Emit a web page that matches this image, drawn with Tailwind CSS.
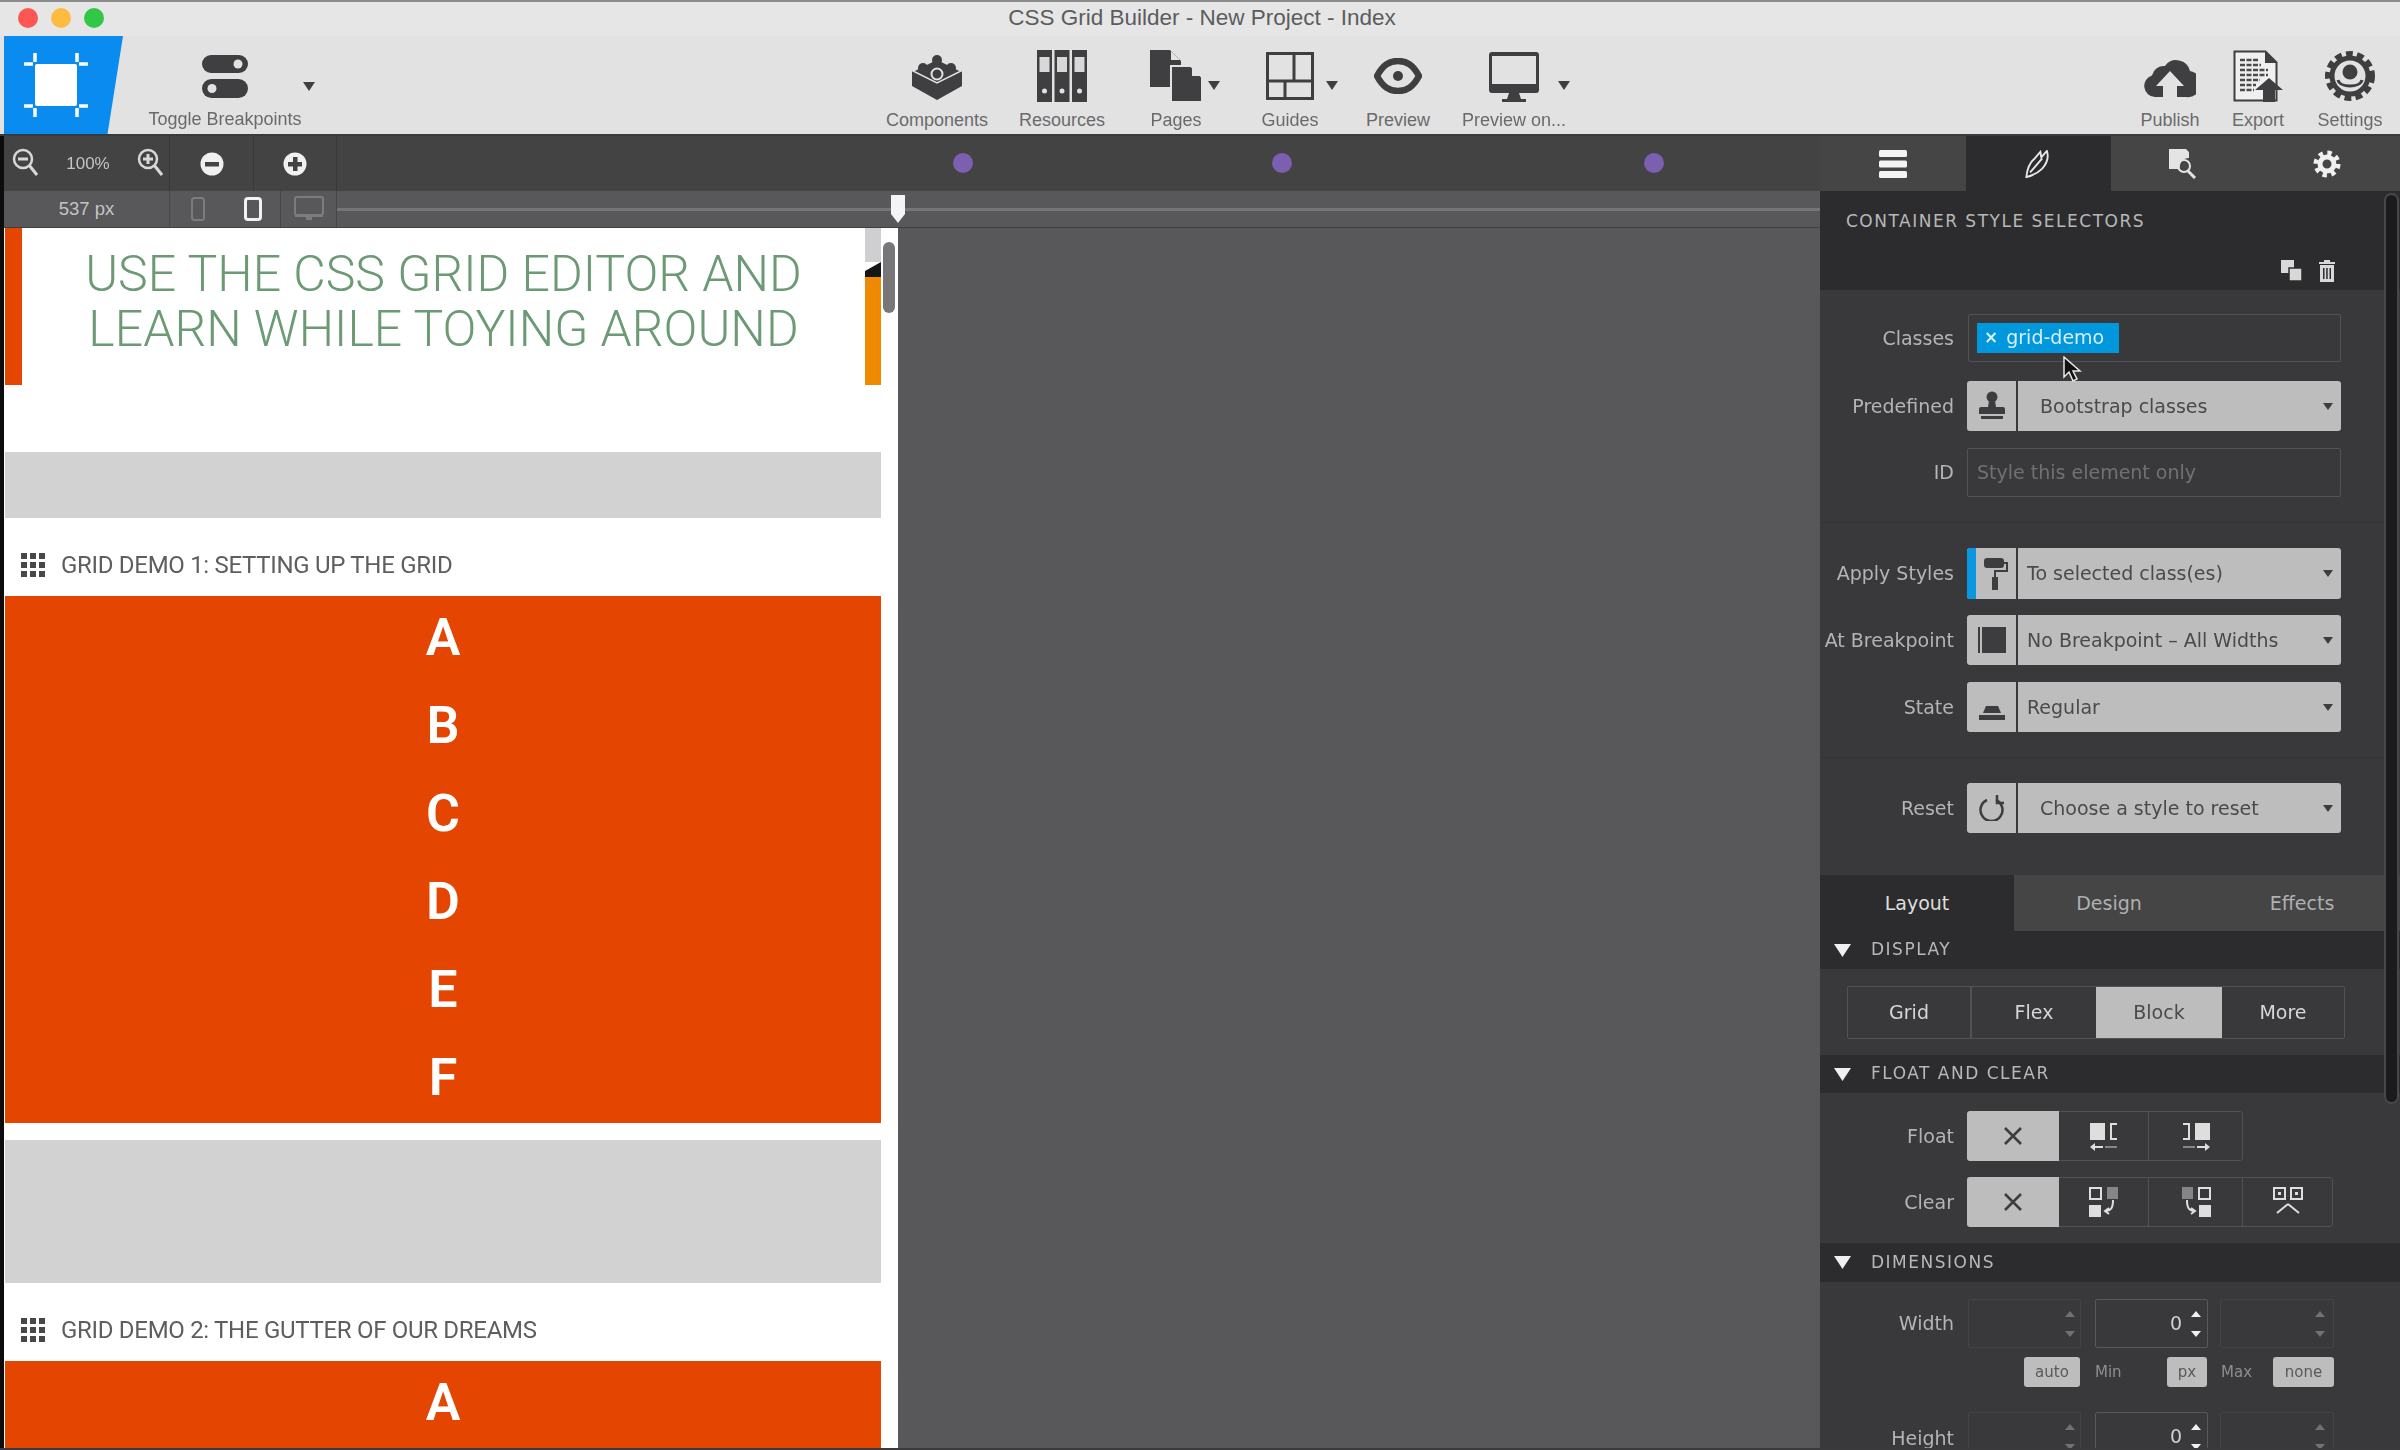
<!DOCTYPE html>
<html lang="en">
<head>
  <meta charset="utf-8" />
  <title>CSS Grid Builder</title>
  <script src="https://cdn.jsdelivr.net/npm/@tailwindcss/browser@4"></script>
</head>
<body class="bg-[#58585a]">
<div class="relative w-[2400px] h-[1450px] overflow-hidden flex flex-col blur-[0.6px] font-['Liberation_Sans',sans-serif]">

  <!-- title bar + toolbar -->
  <header class="h-[136px] shrink-0 bg-[#e2e2e2] border-t-2 border-b-2 border-t-[#8a8a8a] border-b-[#3a3a3c]">
    <div class="relative h-[34px] flex items-center gap-[13px] pl-[18px] pb-[2px] bg-[#e6e6e6]">
      <span class="w-[20px] h-[20px] rounded-full bg-[#fc5753]"></span>
      <span class="w-[20px] h-[20px] rounded-full bg-[#fdbc40]"></span>
      <span class="w-[20px] h-[20px] rounded-full bg-[#33c748]"></span>
      <span class="absolute left-[1008px] top-[3px] w-[388px] text-center text-[22.5px] leading-[26px] text-[#5c5c5e] whitespace-nowrap">CSS Grid Builder - New Project - Index</span>
    </div>
    <div class="flex h-[98px] text-[18px] text-[#6a6a6c]">
      <!-- logo -->
      <div class="ml-[4px] w-[119px] h-[98px] bg-[#0a8bf0] [clip-path:polygon(0_0,100%_0,87%_100%,0_100%)] shrink-0 flex items-center justify-center">
        <svg width="64" height="64" viewBox="0 0 64 64" class="-ml-[16px]">
          <rect x="11" y="11" width="42" height="42" rx="2" fill="#fff"/>
          <path d="M11 0v9M0 11h9M53 0v9M55 11h9M11 64v-9M0 53h9M53 64v-9M55 53h9" stroke="#fff" stroke-width="3.5" fill="none"/>
        </svg>
      </div>

      <div class="relative ml-[17px] w-[170px] flex flex-col items-center">
        <svg class="mt-[19px]" width="46" height="43" viewBox="0 0 46 43">
          <rect x="0" y="0" width="46" height="18" rx="9" fill="#3f3f41"/><circle cx="36" cy="9" r="4.5" fill="#e2e2e2"/>
          <rect x="0" y="24" width="46" height="19" rx="9.5" fill="#3f3f41"/><circle cx="10" cy="33.5" r="4.5" fill="#e2e2e2"/>
        </svg>
        <span class="mt-[8px] whitespace-nowrap">Toggle Breakpoints</span>
        <svg class="absolute left-[163px] top-[46px]" width="12" height="9" viewBox="0 0 12 9"><path d="M0 0h12L6 9z" fill="#3f3f41"/></svg>
      </div>

      <div class="ml-[572px] w-[110px] flex flex-col items-center">
        <svg class="mt-[18px]" width="52" height="46" viewBox="0 0 52 46">
          <path d="M26 13 51 17v15L26 46 1 32V17z" fill="#3f3f41"/>
          <path d="M26 5 50 17 26 29 2 17z" fill="#3f3f41" stroke="#e2e2e2" stroke-width="1.5"/>
          <circle cx="26" cy="6" r="5" fill="#3f3f41"/><circle cx="12" cy="14" r="5" fill="#3f3f41"/><circle cx="40" cy="14" r="5" fill="#3f3f41"/>
          <circle cx="26" cy="20" r="5.5" fill="#3f3f41" stroke="#e2e2e2" stroke-width="2"/>
        </svg>
        <span class="mt-[7px] whitespace-nowrap">Components</span>
      </div>

      <div class="ml-[15px] w-[110px] flex flex-col items-center">
        <svg class="mt-[14px]" width="50" height="52" viewBox="0 0 50 52">
          <path d="M0 0h15v52H0zM17.500 0h15v52h-15zM35 0h15v52H35z" fill="#3f3f41"/>
          <path d="M2.500 7h10v15h-10zM20 7h10v15H20zM37.500 7h10v15h-10z" fill="#d8d8d8"/>
          <circle cx="7.500" cy="41" r="2.500" fill="#e2e2e2"/><circle cx="25" cy="41" r="2.500" fill="#e2e2e2"/><circle cx="42.500" cy="41" r="2.500" fill="#e2e2e2"/>
        </svg>
        <span class="mt-[5px] whitespace-nowrap">Resources</span>
      </div>

      <div class="relative ml-[9px] w-[100px] flex flex-col items-center">
        <svg class="mt-[14px]" width="52" height="52" viewBox="0 0 52 52">
          <path d="M0 0h20l11 11v26H0z" fill="#3f3f41"/>
          <path d="M21 16h20l11 11v25H21z" fill="#3f3f41" stroke="#e2e2e2" stroke-width="2"/>
          <path d="M21 1v9h9zM42 17v9h9z" fill="#e2e2e2"/>
        </svg>
        <span class="mt-[5px] whitespace-nowrap">Pages</span>
        <svg class="absolute left-[82px] top-[45px]" width="12" height="9" viewBox="0 0 12 9"><path d="M0 0h12L6 9z" fill="#3f3f41"/></svg>
      </div>

      <div class="relative ml-[14px] w-[100px] flex flex-col items-center">
        <svg class="mt-[16px]" width="48" height="48" viewBox="0 0 48 48">
          <path d="M1.500 1.500h45v45h-45zM1.500 29h45M28 1.500V29M19 29v17.500" fill="none" stroke="#3f3f41" stroke-width="3"/>
        </svg>
        <span class="mt-[7px] whitespace-nowrap">Guides</span>
        <svg class="absolute left-[86px] top-[45px]" width="12" height="9" viewBox="0 0 12 9"><path d="M0 0h12L6 9z" fill="#3f3f41"/></svg>
      </div>

      <div class="ml-[13px] w-[90px] flex flex-col items-center">
        <svg class="mt-[22px]" width="48" height="36" viewBox="0 0 48 36">
          <path d="M3 18C9 7 15 3 24 3s15 4 21 15c-6 11-12 15-21 15S9 29 3 18z" fill="none" stroke="#3f3f41" stroke-width="6.500"/>
          <circle cx="24" cy="18" r="5" fill="#3f3f41"/>
        </svg>
        <span class="mt-[13px] whitespace-nowrap">Preview</span>
      </div>

      <div class="relative ml-[11px] w-[120px] flex flex-col items-center">
        <svg class="mt-[16px]" width="50" height="50" viewBox="0 0 50 50">
          <path d="M3 0h44a3 3 0 0 1 3 3v35a3 3 0 0 1-3 3H3a3 3 0 0 1-3-3V3a3 3 0 0 1 3-3z" fill="#3f3f41"/>
          <rect x="3" y="4" width="44" height="28" fill="#e2e2e2"/>
          <path d="M20 41h10l2 6h5v3H13v-3h5z" fill="#3f3f41"/>
        </svg>
        <span class="mt-[5px] whitespace-nowrap">Preview on...</span>
        <svg class="absolute left-[104px] top-[45px]" width="12" height="9" viewBox="0 0 12 9"><path d="M0 0h12L6 9z" fill="#3f3f41"/></svg>
      </div>

      <div class="ml-[556px] w-[80px] flex flex-col items-center">
        <svg class="mt-[21px]" width="52" height="41" viewBox="0 0 52 41">
          <path d="M11 40A11 11 0 0 1 8 18.500 12 12 0 0 1 21 9 14 14 0 0 1 46 14a13 13 0 0 1-4 26H33V29h7L26 14 12 29h7v11z" fill="#3f3f41"/>
        </svg>
        <span class="mt-[9px] whitespace-nowrap">Publish</span>
      </div>

      <div class="ml-[8px] w-[80px] flex flex-col items-center">
        <svg class="mt-[14px]" width="50" height="52" viewBox="0 0 50 52">
          <path d="M1.500 1.500h31l11 11v38h-42z" fill="#f0f0f0" stroke="#3f3f41" stroke-width="2"/>
          <path d="M32 1v12h12z" fill="#3f3f41"/>
          <path d="M7 10h18M7 15h21M7 20h28M7 25h28M7 30h20M7 35h16M7 40h14" stroke="#4b4b4d" stroke-width="2.500" stroke-dasharray="5 1.500"/>
          <path d="M36 28 50 40h-8v12H30V40h-8z" fill="#3f3f41"/>
        </svg>
        <span class="mt-[5px] whitespace-nowrap">Export</span>
      </div>

      <div class="ml-[12px] w-[80px] flex flex-col items-center">
        <svg class="mt-[14px]" width="52" height="52" viewBox="0 0 52 52">
          <circle cx="26" cy="26" r="21" fill="none" stroke="#3f3f41" stroke-width="8" stroke-dasharray="6.500 4"/>
          <circle cx="26" cy="26" r="18" fill="none" stroke="#3f3f41" stroke-width="5"/>
          <circle cx="26" cy="22" r="7.500" fill="#3f3f41"/>
          <path d="M14 30c2 8 22 8 24 0" fill="none" stroke="#3f3f41" stroke-width="3"/>
        </svg>
        <span class="mt-[5px] whitespace-nowrap">Settings</span>
      </div>
    </div>
  </header>

  <div class="flex flex-1 min-h-0">
    <!-- canvas column -->
    <div class="w-[1820px] shrink-0 flex flex-col">
      <!-- breakpoints row -->
      <div class="relative h-[55px] shrink-0 bg-[#434344] flex items-center text-[#c4c4c4] text-[17px]">
        <div class="w-[170px] h-full flex items-center pl-[12px] border-r border-[#39393b]">
          <svg width="26" height="32" viewBox="0 0 26 32"><circle cx="11" cy="11" r="9" fill="none" stroke="#d8d8d8" stroke-width="2.500"/><path d="M6 11h10M17 17l8 10" stroke="#d8d8d8" stroke-width="3"/></svg>
          <span class="ml-[28px] w-[44px] text-center">100%</span>
          <svg class="ml-[27px]" width="26" height="32" viewBox="0 0 26 32"><circle cx="11" cy="11" r="9" fill="none" stroke="#d8d8d8" stroke-width="2.500"/><path d="M6 11h10M11 6v10M17 17l8 10" stroke="#d8d8d8" stroke-width="3"/></svg>
        </div>
        <div class="w-[84px] h-full flex items-center justify-center border-r border-[#39393b]">
          <svg width="24" height="24" viewBox="0 0 24 24"><circle cx="12" cy="12" r="11.500" fill="#f0f0f0"/><rect x="5" y="10" width="14" height="4.500" fill="#434344"/></svg>
        </div>
        <div class="w-[83px] h-full flex items-center justify-center border-r border-[#39393b]">
          <svg width="24" height="24" viewBox="0 0 24 24"><circle cx="12" cy="12" r="11.500" fill="#f0f0f0"/><path d="M5 10h5V5h4.500v5H19v4.500h-4.500V19H10v-4.500H5z" fill="#434344"/></svg>
        </div>
        <span class="absolute left-[953px] top-[17px] w-[20px] h-[20px] rounded-full bg-[#7b5fb0]"></span>
        <span class="absolute left-[1272px] top-[17px] w-[20px] h-[20px] rounded-full bg-[#7b5fb0]"></span>
        <span class="absolute left-[1644px] top-[17px] w-[20px] h-[20px] rounded-full bg-[#7b5fb0]"></span>
      </div>
      <div class="relative h-[37px] shrink-0 bg-[#58585a] flex items-center border-b border-[#3f3f41]">
        <div class="w-[170px] h-full flex items-center justify-center pl-[4px] border-r border-[#464648] text-[18.5px] text-[#c4c4c4]">537 px</div>
        <div class="w-[55px] h-full flex items-center justify-center">
          <svg width="14" height="24" viewBox="0 0 14 24"><rect x="1" y="1" width="12" height="22" rx="2.500" fill="none" stroke="#7c7c7e" stroke-width="2"/></svg>
        </div>
        <div class="w-[56px] h-full flex items-center justify-center border-r border-[#464648]">
          <svg width="18" height="24" viewBox="0 0 18 24"><rect x="1.500" y="1.500" width="15" height="21" rx="2.500" fill="none" stroke="#f2f2f2" stroke-width="3"/></svg>
        </div>
        <div class="w-[56px] h-full flex items-center justify-center border-r border-[#464648]">
          <svg width="30" height="26" viewBox="0 0 30 26"><rect x="1" y="1" width="28" height="18" rx="2" fill="none" stroke="#7c7c7e" stroke-width="2"/><path d="M1 19h28v2H1zM12 21h6v3h-6z" fill="#7c7c7e"/></svg>
        </div>
        <div class="flex-1 h-[3px] bg-[#757577]"></div>
        <svg class="absolute left-[890px] top-[4px]" width="16" height="28" viewBox="0 0 16 28"><path d="M1 0h14v19l-7 9-7-9z" fill="#f4f4f6"/></svg>
      </div>

      <div class="flex flex-1 min-h-0">
        <!-- preview page -->
        <div class="relative w-[898px] shrink-0 bg-white pl-[5px] pr-[17px] flex flex-col overflow-hidden">
          <div class="flex h-[157px] shrink-0">
            <div class="w-[17px] bg-[#e44500]"></div>
            <h1 class="flex-1 pt-[19px] text-center text-[50px] leading-[55px] font-light text-[#6b9a74] font-['Roboto',sans-serif] whitespace-nowrap">USE THE CSS GRID EDITOR AND<br>LEARN WHILE TOYING AROUND</h1>
            <div class="w-[16px] flex flex-col">
              <div class="h-[34px] bg-[#cfcfd2]"></div>
              <div class="h-[15px] bg-[#161616] [clip-path:polygon(0_60%,100%_0,100%_100%,0_100%)]"></div>
              <div class="flex-1 bg-[#ef8a00]"></div>
            </div>
          </div>
          <div class="mt-[67px] h-[66px] shrink-0 bg-[#d2d2d2]"></div>
          <div class="h-[78px] shrink-0 flex items-center pl-[16px] pt-[16px] text-[#5e5e60] font-['Roboto',sans-serif] text-[24px] tracking-[-0.3px]">
            <svg width="24" height="24" viewBox="0 0 24 24" fill="#48484a"><path d="M0 0h6v6H0zM9 0h6v6H9zM18 0h6v6h-6zM0 9h6v6H0zM9 9h6v6H9zM18 9h6v6h-6zM0 18h6v6H0zM9 18h6v6H9zM18 18h6v6h-6z"/></svg>
            <span class="ml-[16px] whitespace-nowrap">GRID DEMO 1: SETTING UP THE GRID</span>
          </div>
          <div class="h-[527px] shrink-0 bg-[#e44500] flex flex-col items-center text-white font-semibold text-[52px] font-['Roboto',sans-serif]">
            <div class="h-[88px] mt-[-2px] flex items-center">A</div>
            <div class="h-[88px] flex items-center">B</div>
            <div class="h-[88px] flex items-center">C</div>
            <div class="h-[88px] flex items-center">D</div>
            <div class="h-[88px] flex items-center">E</div>
            <div class="h-[88px] flex items-center">F</div>
          </div>
          <div class="mt-[17px] h-[143px] shrink-0 bg-[#d2d2d2]"></div>
          <div class="h-[78px] shrink-0 flex items-center pl-[16px] pt-[16px] text-[#5e5e60] font-['Roboto',sans-serif] text-[24px] tracking-[-0.3px]">
            <svg width="24" height="24" viewBox="0 0 24 24" fill="#48484a"><path d="M0 0h6v6H0zM9 0h6v6H9zM18 0h6v6h-6zM0 9h6v6H0zM9 9h6v6H9zM18 9h6v6h-6zM0 18h6v6H0zM9 18h6v6H9zM18 18h6v6h-6z"/></svg>
            <span class="ml-[16px] whitespace-nowrap">GRID DEMO 2: THE GUTTER OF OUR DREAMS</span>
          </div>
          <div class="h-[87px] shrink-0 bg-[#e44500] flex justify-center text-white font-semibold text-[52px] font-['Roboto',sans-serif]">
            <div class="h-[84px] flex items-center">A</div>
          </div>
          <div class="absolute left-[883px] top-[14px] w-[12px] h-[71px] rounded-full bg-[#77777a]"></div>
        </div>
        <div class="flex-1 bg-[#58585a]"></div>
      </div>
    </div>

    <!-- inspector -->
    <aside class="relative w-[580px] shrink-0 flex flex-col bg-[#39393b] text-[#b4b4b4] font-['DejaVu_Sans',sans-serif] text-[19px]">
      <div class="flex h-[55px] shrink-0 bg-[#454546]">
        <div class="w-[146px] flex items-center justify-center">
          <svg width="28" height="28" viewBox="0 0 28 28" fill="#f4f4f4"><rect y="0" width="28" height="7" rx="1.500"/><rect y="10.500" width="28" height="7" rx="1.500"/><rect y="21" width="28" height="7" rx="1.500"/></svg>
        </div>
        <div class="w-[145px] flex items-center justify-center bg-[#2c2c2e]">
          <svg width="27" height="28" viewBox="0 0 28 30" fill="none" stroke="#e8e8e8" stroke-width="2"><path d="M1 29c1-10 4-16 9-20l6-7 1 6 6-7c2 6 1 12-5 19-4 4-9 7-17 9zM5 24 18 9"/></svg>
        </div>
        <div class="w-[144px] flex items-center justify-center">
          <svg width="28" height="30" viewBox="0 0 28 30"><path d="M0 0h17l3 3v6a9 9 0 0 0-9 11H0z" fill="#e4e4e4"/><circle cx="15" cy="17" r="6" fill="none" stroke="#e4e4e4" stroke-width="2"/><path d="M19 22l7 7" stroke="#e4e4e4" stroke-width="3"/></svg>
        </div>
        <div class="flex-1 flex items-center justify-center pr-[1px]">
          <svg width="28" height="28" viewBox="0 0 28 28"><circle cx="14" cy="14" r="11" fill="none" stroke="#f0f0f0" stroke-width="5" stroke-dasharray="4.300 4.340"/><circle cx="14" cy="14" r="7" fill="none" stroke="#f0f0f0" stroke-width="5"/></svg>
        </div>
      </div>

      <div class="relative h-[99px] shrink-0 bg-[#2c2c2e] pl-[26px] pt-[20px]">
        <h2 class="text-[17px] leading-[20px] tracking-[1.5px] text-[#b8b8b8] whitespace-nowrap">CONTAINER STYLE SELECTORS</h2>
        <div class="absolute left-[461px] top-[69px] flex items-center gap-[16px]">
          <svg width="22" height="22" viewBox="0 0 22 22" fill="#d8d8d8"><rect x="0" y="0" width="13" height="13"/><rect x="8" y="8" width="13" height="13" stroke="#2c2c2e" stroke-width="1.500"/></svg>
          <svg width="16" height="22" viewBox="0 0 16 22" fill="#d8d8d8"><path d="M5 0h6v2h5v2H0V2h5zM1 5h14v17H1zM4 8v11h1.500V8zM7.200 8v11h1.500V8zM10.500 8v11H12V8z" fill-rule="evenodd"/></svg>
        </div>
      </div>

      <div class="flex flex-col">
        <!-- selector rows -->
        <div class="mt-[24px] flex items-center h-[48px]">
          <label class="w-[134px] text-right">Classes</label>
          <div class="ml-[14px] w-[373px] h-full border border-[#525254] rounded-[2px] pl-[8px] pt-[7px]">
            <span class="inline-flex items-center h-[30px] w-[142px] bg-[#0097dc] text-[#d8eefa] pl-[7px] gap-[8px] leading-none"><span class="font-bold text-[17px]">×</span>grid-demo</span>
          </div>
        </div>
        <div class="mt-[19px] flex items-center h-[50px]">
          <label class="w-[134px] text-right">Predefined</label>
          <div class="ml-[13px] w-[374px] h-full flex rounded-[3px] bg-[#bdbdbd] text-[#4a4a4c]">
            <div class="w-[51px] flex items-center justify-center border-r-2 border-[#39393b]">
              <svg width="26" height="30" viewBox="0 0 26 30" fill="#3d3d3f"><circle cx="13" cy="6" r="5.500"/><path d="M10 10h6l1 6h-8z"/><path d="M2 16h22a2 2 0 0 1 2 2v5H0v-5a2 2 0 0 1 2-2zM2 25h22v3H2z"/></svg>
            </div>
            <span class="flex-1 self-center pl-[22px] whitespace-nowrap">Bootstrap classes</span>
            <svg class="self-center mr-[8px]" width="10" height="7" viewBox="0 0 10 7"><path d="M0 0h10L5 7z" fill="#3d3d3f"/></svg>
          </div>
        </div>
        <div class="mt-[17px] flex items-center h-[49px]">
          <label class="w-[134px] text-right">ID</label>
          <div class="ml-[13px] w-[374px] h-full flex items-center border border-[#525254] rounded-[2px] pl-[9px] text-[#717173] whitespace-nowrap">Style this element only</div>
        </div>
        <div class="mt-[25px] h-[1px] bg-[#333335]"></div>

        <div class="mt-[25px] flex items-center h-[51px]">
          <label class="w-[134px] text-right">Apply Styles</label>
          <div class="ml-[13px] w-[374px] h-full flex rounded-[3px] bg-[#bdbdbd] text-[#4a4a4c] overflow-hidden">
            <div class="w-[51px] flex items-center justify-center border-r-2 border-l-[9px] border-r-[#39393b] border-l-[#0a97e0]">
              <svg width="24" height="32" viewBox="0 0 24 32" fill="#3d3d3f"><rect x="0" y="0" width="20" height="10" rx="3"/><path d="M20 4h4v10H12v5h-2v-7h12V6h-2zM8 19h6v13H8z"/></svg>
            </div>
            <span class="flex-1 self-center pl-[9px] whitespace-nowrap">To selected class(es)</span>
            <svg class="self-center mr-[8px]" width="10" height="7" viewBox="0 0 10 7"><path d="M0 0h10L5 7z" fill="#3d3d3f"/></svg>
          </div>
        </div>
        <div class="mt-[16px] flex items-center h-[50px]">
          <label class="w-[134px] text-right whitespace-nowrap">At Breakpoint</label>
          <div class="ml-[13px] w-[374px] h-full flex rounded-[3px] bg-[#bdbdbd] text-[#4a4a4c]">
            <div class="w-[51px] flex items-center justify-center border-r-2 border-[#39393b]">
              <svg width="28" height="26" viewBox="0 0 28 26" fill="#3d3d3f"><rect x="0" y="0" width="2" height="26"/><rect x="4" y="0" width="24" height="26"/></svg>
            </div>
            <span class="flex-1 self-center pl-[9px] whitespace-nowrap">No Breakpoint – All Widths</span>
            <svg class="self-center mr-[8px]" width="10" height="7" viewBox="0 0 10 7"><path d="M0 0h10L5 7z" fill="#3d3d3f"/></svg>
          </div>
        </div>
        <div class="mt-[17px] flex items-center h-[50px]">
          <label class="w-[134px] text-right">State</label>
          <div class="ml-[13px] w-[374px] h-full flex rounded-[3px] bg-[#bdbdbd] text-[#4a4a4c]">
            <div class="w-[51px] flex items-center justify-center border-r-2 border-[#39393b]">
              <svg class="mt-[12px]" width="26" height="14" viewBox="0 0 26 14" fill="#3d3d3f"><path d="M7 0h12l3 7H4zM0 9h26v5H0z"/></svg>
            </div>
            <span class="flex-1 self-center pl-[9px] whitespace-nowrap">Regular</span>
            <svg class="self-center mr-[8px]" width="10" height="7" viewBox="0 0 10 7"><path d="M0 0h10L5 7z" fill="#3d3d3f"/></svg>
          </div>
        </div>
        <div class="mt-[25px] h-[1px] bg-[#333335]"></div>

        <div class="mt-[25px] flex items-center h-[50px]">
          <label class="w-[134px] text-right">Reset</label>
          <div class="ml-[13px] w-[374px] h-full flex rounded-[3px] bg-[#bdbdbd] text-[#4a4a4c]">
            <div class="w-[51px] flex items-center justify-center border-r-2 border-[#39393b]">
              <svg width="26" height="26" viewBox="0 0 26 26" fill="none" stroke="#3d3d3f" stroke-width="2.500"><path d="M8 5a11 11 0 1 0 9 0"/><path d="M18 0v8h7" stroke-width="2.500"/></svg>
            </div>
            <span class="flex-1 self-center pl-[22px] whitespace-nowrap">Choose a style to reset</span>
            <svg class="self-center mr-[8px]" width="10" height="7" viewBox="0 0 10 7"><path d="M0 0h10L5 7z" fill="#3d3d3f"/></svg>
          </div>
        </div>

        <!-- Layout / Design / Effects -->
        <div class="mt-[42px] h-[56px] flex items-center text-center bg-[#454546]">
          <div class="w-[194px] h-full flex items-center justify-center bg-[#2c2c2e] text-[#dedede]">Layout</div>
          <div class="w-[190px] text-[#b0b0b0]">Design</div>
          <div class="flex-1 text-[#b0b0b0]">Effects</div>
        </div>

        <div class="h-[38px] flex items-center bg-[#2c2c2e] pl-[14px] text-[17px] tracking-[1.5px] text-[#b8b8b8]">
          <svg width="17" height="13" viewBox="0 0 17 13"><path d="M0 0h17L8.500 13z" fill="#f0f0f0"/></svg><span class="ml-[20px]">DISPLAY</span>
        </div>
        <div class="mt-[17px] ml-[27px] w-[498px] h-[53px] flex border border-[#525254] rounded-[2px] text-[#d6d6d6]">
          <div class="w-[124px] flex items-center justify-center border-r-2 border-[#525254]">Grid</div>
          <div class="w-[124px] flex items-center justify-center">Flex</div>
          <div class="w-[126px] flex items-center justify-center bg-[#bdbdbd] text-[#4a4a4c]">Block</div>
          <div class="flex-1 flex items-center justify-center">More</div>
        </div>

        <div class="mt-[16px] h-[38px] flex items-center bg-[#2c2c2e] pl-[14px] text-[17px] tracking-[1.5px] text-[#b8b8b8]">
          <svg width="17" height="13" viewBox="0 0 17 13"><path d="M0 0h17L8.500 13z" fill="#f0f0f0"/></svg><span class="ml-[20px]">FLOAT AND CLEAR</span>
        </div>
        <div class="mt-[18px] flex items-center h-[50px]">
          <label class="w-[134px] text-right">Float</label>
          <div class="ml-[13px] w-[276px] h-full flex border border-[#525254] rounded-[3px]">
            <div class="w-[92px] -my-[1px] -ml-[1px] flex items-center justify-center bg-[#bdbdbd] rounded-l-[3px]">
              <svg width="18" height="18" viewBox="0 0 18 18"><path d="M1 1l16 16M17 1 1 17" stroke="#3d3d3f" stroke-width="2.500"/></svg>
            </div>
            <div class="w-[90px] flex items-center justify-center border-r border-[#525254]">
              <svg width="28" height="30" viewBox="0 0 28 30"><rect x="0" y="2" width="15" height="17" fill="#dedede"/><path d="M27 3h-6v15h6" fill="none" stroke="#dedede" stroke-width="2"/><path d="M5 22 0 26l5 4v-3h8v-2H5z" fill="#dedede"/><path d="M15 26h12" stroke="#858587" stroke-width="2"/></svg>
            </div>
            <div class="flex-1 flex items-center justify-center">
              <svg width="28" height="30" viewBox="0 0 28 30"><rect x="13" y="2" width="15" height="17" fill="#dedede"/><path d="M1 3h6v15H1" fill="none" stroke="#dedede" stroke-width="2"/><path d="M23 22l5 4-5 4v-3h-8v-2h8z" fill="#dedede"/><path d="M1 26h12" stroke="#858587" stroke-width="2"/></svg>
            </div>
          </div>
        </div>
        <div class="mt-[16px] flex items-center h-[50px]">
          <label class="w-[134px] text-right">Clear</label>
          <div class="ml-[13px] w-[366px] h-full flex border border-[#525254] rounded-[3px]">
            <div class="w-[92px] -my-[1px] -ml-[1px] flex items-center justify-center bg-[#bdbdbd] rounded-l-[3px]">
              <svg width="18" height="18" viewBox="0 0 18 18"><path d="M1 1l16 16M17 1 1 17" stroke="#3d3d3f" stroke-width="2.500"/></svg>
            </div>
            <div class="w-[90px] flex items-center justify-center border-r border-[#525254]">
              <svg width="30" height="30" viewBox="0 0 30 30"><rect x="1" y="1" width="11" height="11" fill="none" stroke="#dedede" stroke-width="2"/><rect x="18" y="0" width="11" height="12" fill="#858587"/><rect x="0" y="18" width="12" height="12" fill="#dedede"/><path d="M24 13c0 8-2 11-8 11M20 21l-4 3 4 3" fill="none" stroke="#dedede" stroke-width="2"/></svg>
            </div>
            <div class="w-[94px] flex items-center justify-center border-r border-[#525254]">
              <svg width="30" height="30" viewBox="0 0 30 30"><rect x="18" y="1" width="11" height="11" fill="none" stroke="#dedede" stroke-width="2"/><rect x="1" y="0" width="11" height="12" fill="#858587"/><rect x="18" y="18" width="12" height="12" fill="#dedede"/><path d="M6 13c0 8 2 11 8 11M10 21l4 3-4 3" fill="none" stroke="#dedede" stroke-width="2"/></svg>
            </div>
            <div class="flex-1 flex items-center justify-center">
              <svg width="30" height="30" viewBox="0 0 30 30"><rect x="1" y="1" width="11" height="11" fill="none" stroke="#dedede" stroke-width="2"/><rect x="18" y="1" width="11" height="11" fill="none" stroke="#dedede" stroke-width="2"/><rect x="5" y="5" width="3" height="3" fill="#dedede"/><rect x="22" y="5" width="3" height="3" fill="#dedede"/><path d="M15 17 4 26M15 17l11 9" fill="none" stroke="#dedede" stroke-width="2"/></svg>
            </div>
          </div>
        </div>

        <div class="mt-[16px] h-[39px] flex items-center bg-[#2c2c2e] pl-[14px] text-[17px] tracking-[1.5px] text-[#b8b8b8]">
          <svg width="17" height="13" viewBox="0 0 17 13"><path d="M0 0h17L8.500 13z" fill="#f0f0f0"/></svg><span class="ml-[20px]">DIMENSIONS</span>
        </div>
        <div class="mt-[17px] flex items-center h-[49px]">
          <label class="w-[134px] text-right">Width</label>
          <div class="ml-[14px] w-[113px] h-full border border-[#444446] rounded-[2px] flex items-center justify-end pr-[5px]">
            <svg width="10" height="26" viewBox="0 0 10 26" fill="#717173"><path d="M5 0l5 6H0zM0 20h10l-5 6z"/></svg>
          </div>
          <div class="ml-[14px] w-[113px] h-full border border-[#58585a] rounded-[2px] flex items-center justify-end pr-[6px] text-[#d0d0d0] gap-[9px]">0
            <svg width="10" height="26" viewBox="0 0 10 26" fill="#f0f0f0"><path d="M5 0l5 6H0zM0 20h10l-5 6z"/></svg>
          </div>
          <div class="ml-[12px] w-[114px] h-full border border-[#444446] rounded-[2px] flex items-center justify-end pr-[8px]">
            <svg width="10" height="26" viewBox="0 0 10 26" fill="#717173"><path d="M5 0l5 6H0zM0 20h10l-5 6z"/></svg>
          </div>
        </div>
        <div class="mt-[9px] h-[30px] flex items-center text-[15px]">
          <span class="ml-[204px] w-[56px] h-full rounded-[3px] bg-[#bdbdbd] text-[#59595b] flex items-center justify-center">auto</span>
          <span class="ml-[15px] w-[72px] text-[#8e8e90]">Min</span>
          <span class="w-[40px] h-full rounded-[3px] bg-[#bdbdbd] text-[#59595b] flex items-center justify-center">px</span>
          <span class="ml-[14px] w-[52px] text-[#8e8e90]">Max</span>
          <span class="w-[61px] h-full rounded-[3px] bg-[#bdbdbd] text-[#59595b] flex items-center justify-center">none</span>
        </div>
        <div class="mt-[25px] flex items-start h-[49px]">
          <label class="w-[134px] text-right pt-[12px]">Height</label>
          <div class="ml-[14px] w-[113px] h-full border border-[#444446] rounded-[2px] flex items-center justify-end pr-[5px]">
            <svg width="10" height="26" viewBox="0 0 10 26" fill="#717173"><path d="M5 0l5 6H0zM0 20h10l-5 6z"/></svg>
          </div>
          <div class="ml-[14px] w-[113px] h-full border border-[#58585a] rounded-[2px] flex items-center justify-end pr-[6px] text-[#d0d0d0] gap-[9px]">0
            <svg width="10" height="26" viewBox="0 0 10 26" fill="#f0f0f0"><path d="M5 0l5 6H0zM0 20h10l-5 6z"/></svg>
          </div>
          <div class="ml-[12px] w-[114px] h-full border border-[#444446] rounded-[2px] flex items-center justify-end pr-[8px]">
            <svg width="10" height="26" viewBox="0 0 10 26" fill="#717173"><path d="M5 0l5 6H0zM0 20h10l-5 6z"/></svg>
          </div>
        </div>
      </div>

      <!-- inspector scrollbar -->
      <div class="absolute left-[564px] top-[57px] w-[15px] h-[911px] rounded-full bg-[#1b1b1d] border-2 border-[#48484a]"></div>
    </aside>
  </div>

  <!-- left and bottom edges of the frame -->
  <div class="absolute left-0 top-[136px] bottom-0 w-[4px] bg-[#0c0c0c]"></div>
  <div class="absolute left-0 right-0 bottom-0 h-[2px] bg-[#3a3a3c]"></div>

  <!-- mouse pointer -->
  <svg class="absolute left-[2063px] top-[356px]" width="20" height="27" viewBox="0 0 20 27"><path d="M1 1v20l5-5 4 9 4-2-4-8h7z" fill="#111" stroke="#e8e8e8" stroke-width="1.500"/></svg>
</div>
</body>
</html>
